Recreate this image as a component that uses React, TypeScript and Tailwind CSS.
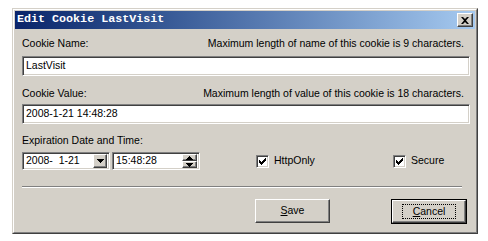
import React from "react";

const sunken =
  "border border-t-[#808080] border-l-[#808080] border-r-white border-b-white shadow-[inset_1px_1px_0_#404040,inset_-1px_-1px_0_#d4d0c8]";
const raised =
  "border border-t-white border-l-white border-r-[#404040] border-b-[#404040] shadow-[inset_-1px_-1px_0_#808080,inset_1px_1px_0_#d4d0c8] bg-[#d4d0c8]";

function CheckBox({ label }: { label: string }) {
  return (
    <label className="flex items-center gap-[5px] whitespace-nowrap">
      <span className={`${sunken} flex h-[13px] w-[13px] shrink-0 items-center justify-center bg-white`}>
        <svg width="7" height="7" viewBox="0 0 7 7">
          <path d="M0 2h1v1h1v1h1V3h1V2h1V1h1V0h1v3H6v1H5v1H4v1H3v1H2V6H1V5H0z" fill="#000" />
        </svg>
      </span>
      <span>{label}</span>
    </label>
  );
}

function Arrow({ up }: { up?: boolean }) {
  return (
    <svg width="7" height="4" viewBox="0 0 7 4">
      <path d={up ? "M3 0h1v1h1v1h1v1h1v1H0V3h1V2h1V1h1z" : "M0 0h7v1H6v1H5v1H4v1H3V3H2V2H1V1H0z"} fill="#000" />
    </svg>
  );
}

export default function App() {
  return (
    <div className="h-[241px] w-[488px] bg-white pl-[12px] pt-[8px] font-['Liberation_Sans',Arial,sans-serif] text-[10.5px] text-black">
      {/* window frame */}
      <div className="h-[226px] w-[466px] border border-t-[#d4d0c8] border-l-[#d4d0c8] border-r-[#404040] border-b-[#404040] bg-[#d4d0c8]">
        <div className="flex h-full flex-col border border-t-white border-l-white border-r-[#808080] border-b-[#808080] p-[1px]">
          {/* title bar */}
          <div className="flex h-[18px] items-center justify-between bg-gradient-to-r from-[#0a246a] to-[#a6caf0] pl-[2px] pr-[2px]">
            <span className="font-['Liberation_Mono',monospace] text-[11.7px] font-bold leading-none text-white">
              Edit Cookie LastVisit
            </span>
            <div className={`${raised} flex h-[14px] w-[16px] items-center justify-center`}>
              <svg width="8" height="7" viewBox="0 0 8 7">
                <path d="M0 0h2l2 2 2-2h2L5 3.5 8 7H6L4 5 2 7H0l3-3.5z" fill="#000" />
              </svg>
            </div>
          </div>

          {/* content */}
          <div className="flex flex-col pl-[7px] pr-[5px] pt-[8px]">
            <div className="flex h-[13px] items-center justify-between pr-[6px] leading-[13px]">
              <span>Cookie Name:</span>
              <span>Maximum length of name of this cookie is 9 characters.</span>
            </div>
            <div className={`${sunken} mt-[6px] flex h-[20px] items-center bg-white pl-[3px]`}>LastVisit</div>

            <div className="mt-[11px] flex h-[13px] items-center justify-between pr-[6px] leading-[13px]">
              <span>Cookie Value:</span>
              <span>Maximum length of value of this cookie is 18 characters.</span>
            </div>
            <div className={`${sunken} mt-[4px] flex h-[20px] items-center bg-white pl-[3px]`}>2008-1-21 14:48:28</div>

            <div className="mt-[10px] h-[13px] leading-[13px]">Expiration Date and Time:</div>

            <div className="mt-[5px] flex items-center">
              <div className={`${sunken} flex h-[18px] w-[88px] shrink-0 items-center whitespace-nowrap bg-white pl-[3px] pr-[2px]`}>
                <span className="flex-1">2008-&nbsp;&nbsp;1-21</span>
                <div className={`${raised} flex h-[14px] w-[14px] items-center justify-center`}>
                  <Arrow />
                </div>
              </div>
              <div className={`${sunken} ml-[2px] flex h-[18px] w-[88px] shrink-0 items-center whitespace-nowrap bg-white pl-[3px] pr-[2px]`}>
                <span className="flex-1">15:48:28</span>
                <div className="flex h-[14px] w-[15px] flex-col">
                  <div className={`${raised} flex flex-1 items-center justify-center`}>
                    <Arrow up />
                  </div>
                  <div className={`${raised} flex flex-1 items-center justify-center`}>
                    <Arrow />
                  </div>
                </div>
              </div>
              <div className="ml-[56px] w-[137px] shrink-0">
                <CheckBox label="HttpOnly" />
              </div>
              <div className="shrink-0">
                <CheckBox label="Secure" />
              </div>
            </div>

            <div className="mr-[8px] mt-[16px] h-[2px] border-t border-t-[#808080] border-b border-b-white" />

            <div className="mt-[11px] flex justify-end gap-[61px] pr-[3px]">
              <button className={`${raised} h-[24px] w-[75px]`}>
                <span className="underline">S</span>ave
              </button>
              <div className="border border-black">
                <button className={`${raised} flex h-[23px] w-[74px] items-center justify-center`}>
                  <span className="border border-dotted border-black px-[10px] leading-[13px]">
                    <span className="underline">C</span>ancel
                  </span>
                </button>
              </div>
            </div>
          </div>
        </div>
      </div>
    </div>
  );
}
